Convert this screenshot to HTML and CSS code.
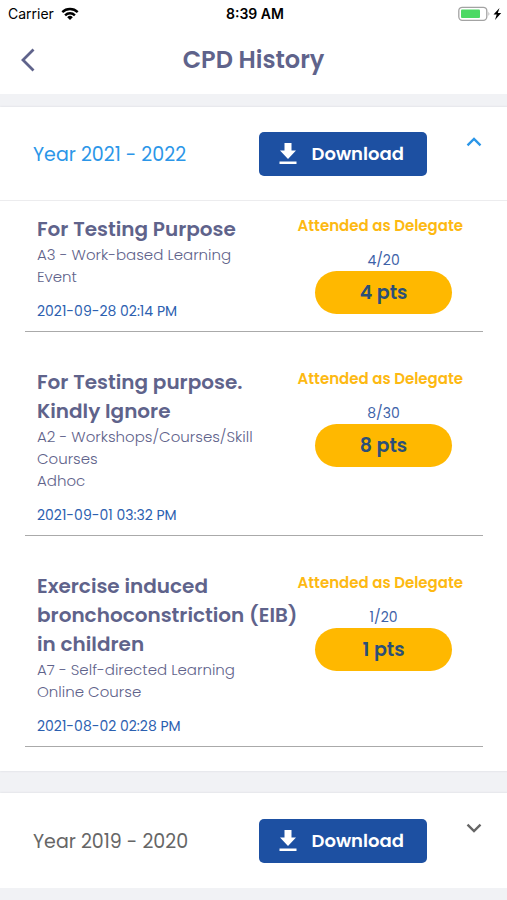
FILE: index.html
```html
<!DOCTYPE html>
<html lang="en">
<head>
<meta charset="utf-8">
<meta name="viewport" content="width=device-width, initial-scale=1">
<title>CPD History</title>
<link rel="stylesheet" href="styles.css">
</head>
<body>
<div class="status">
  <div class="status-left">
    <span>Carrier</span>
    <svg width="18" height="14" viewBox="0 0 18 14" aria-hidden="true"><g fill="none" stroke="#000" stroke-width="2.4"><path d="M1.3 5.2a11 11 0 0 1 15.4 0"/><path d="M4.1 8.3a7 7 0 0 1 9.8 0"/></g><path d="M9 13 6.2 10.2a4 4 0 0 1 5.6 0z"/></svg>
  </div>
  <time class="clock">8:39 AM</time>
  <svg class="battery" width="44" height="16" viewBox="0 0 44 16" aria-hidden="true"><rect x=".8" y="1.3" width="28" height="13" rx="3.5" fill="#fff" stroke="#a3a3a3" stroke-width="1.3"/><rect x="3" y="3.5" width="19" height="8.6" rx="1" fill="#4cd964"/><path d="M30.5 5.5q1.7 2.3 0 4.6z" fill="#a3a3a3"/><path d="M41.500 2 35.500 8.600h3.200L37 14l6.200-7h-3.400z"/></svg>
</div>
<header class="topbar">
  <button class="back" type="button" aria-label="Back"><svg width="16" height="26" viewBox="0 0 16 26"><path d="M13.500 2.500 3 13l10.500 10.500" fill="none" stroke="#5f638b" stroke-width="2.800"/></svg></button>
  <h1>CPD History</h1>
</header>
<main>
  <section class="card">
    <div class="year open">
      <h2>Year 2021 - 2022</h2>
      <button class="download" type="button"><svg width="18" height="22" viewBox="0 0 18 22"><path d="M5.500 0h7v7.500H17L9 16 1 7.500h4.500zM.500 18.500h17V21H.500z" fill="#fff"/></svg>Download</button>
      <button class="toggle" type="button" aria-label="Collapse"><svg width="16" height="10" viewBox="0 0 16 10"><path d="m1.500 8.300 6.500-6.300 6.500 6.300" fill="none" stroke="currentColor" stroke-width="2.400"/></svg></button>
    </div>
    <div class="events">
      <article class="event">
        <div class="info">
          <h3>For Testing Purpose</h3>
          <p>A3 - Work-based Learning</p>
          <p>Event</p>
          <time>2021-09-28 02:14 PM</time>
        </div>
        <div class="score"><strong>Attended as Delegate</strong><span>4/20</span><b class="points">4 pts</b></div>
      </article>
      <article class="event">
        <div class="info">
          <h3>For Testing purpose.<br>Kindly Ignore</h3>
          <p>A2 - Workshops/Courses/Skill<br>Courses</p>
          <p>Adhoc</p>
          <time>2021-09-01 03:32 PM</time>
        </div>
        <div class="score"><strong>Attended as Delegate</strong><span>8/30</span><b class="points">8 pts</b></div>
      </article>
      <article class="event">
        <div class="info">
          <h3>Exercise induced<br>bronchoconstriction (EIB)<br>in children</h3>
          <p>A7 - Self-directed Learning</p>
          <p>Online Course</p>
          <time>2021-08-02 02:28 PM</time>
        </div>
        <div class="score"><strong>Attended as Delegate</strong><span>1/20</span><b class="points">1 pts</b></div>
      </article>
    </div>
  </section>
  <section class="card">
    <div class="year">
      <h2>Year 2019 - 2020</h2>
      <button class="download" type="button"><svg width="18" height="22" viewBox="0 0 18 22"><path d="M5.500 0h7v7.500H17L9 16 1 7.500h4.500zM.500 18.500h17V21H.500z" fill="#fff"/></svg>Download</button>
      <button class="toggle" type="button" aria-label="Expand"><svg width="16" height="10" viewBox="0 0 16 10"><path d="m1.500 1.700 6.500 6.300 6.500-6.300" fill="none" stroke="currentColor" stroke-width="2.400"/></svg></button>
    </div>
  </section>
</main>
</body>
</html>
```
FILE: styles.css
```css
* { box-sizing: border-box; }
body {
  margin: 0;
  background: #f1f2f5;
  color: #5f638b;
  font-family: Poppins, Inter, sans-serif;
}
h1, h2, h3, p { margin: 0; }
button { border: 0; padding: 0; background: none; font: inherit; color: inherit; cursor: pointer; }
svg { display: block; }

.status {
  display: grid;
  grid-template-columns: 1fr auto 1fr;
  align-items: center;
  height: 28px;
  padding: 0 5px 0 8px;
  background: #fff;
  color: #000;
  font: 500 14px/28px Inter, sans-serif;
}
.status-left { display: flex; align-items: center; gap: 7px; font-weight: 400; }
.clock { font-weight: 600; }
.battery { justify-self: end; }

.topbar {
  display: grid;
  grid-template-columns: 48px 1fr 48px;
  align-items: center;
  height: 66px;
  padding-bottom: 3px;
  background: #fff;
}
.back { justify-self: center; padding-left: 8px; }
.topbar h1 { font-size: 24px; line-height: 32px; font-weight: 600; text-align: center; }

main { display: grid; gap: 22px; padding-top: 13px; }
.card { background: #fff; box-shadow: 0 0 2px #d5d7dc; }

.year {
  display: grid;
  grid-template-columns: 1fr 168px 56px;
  align-items: center;
  height: 95px;
  padding: 0 25px 0 33px;
  color: #666;
}
.year.open { height: 94px; color: #2b96e8; border-bottom: 1px solid #ececee; }
.year h2 { padding-top: 2px; font-size: 19px; line-height: 28px; font-weight: 400; }
.download {
  display: flex;
  align-items: center;
  gap: 15px;
  height: 44px;
  padding-left: 20px;
  border-radius: 5px;
  background: #1d50a2;
  color: #fff;
  font-size: 18px;
  font-weight: 600;
}
.toggle { align-self: start; justify-self: end; padding: 30px 1px 8px; }

.events { padding: 14px 25px 24px; }
.event {
  display: grid;
  grid-template-columns: 1fr 172px;
  padding: 0 13px 9px 12px;
  border-bottom: 1px solid #aaa;
}
.event + .event { padding-top: 36px; }
.info h3 { font-size: 20px; line-height: 29px; font-weight: 600; white-space: nowrap; }
.info p { font-size: 15px; line-height: 22px; font-weight: 300; color: #5f638b; }
.info time { display: block; margin-top: 12px; font-size: 14px; line-height: 22px; color: #2c60b0; }
.score {
  display: flex;
  flex-direction: column;
  align-items: center;
  color: #3d62a8;
  font-size: 14px;
  line-height: 22px;
}
.score strong { align-self: flex-start; color: #fdb913; font-size: 15px; font-weight: 600; white-space: nowrap; }
.score span { margin-top: 12px; }
.points {
  width: 137px;
  border-radius: 22px;
  background: #ffb800;
  color: #2b4f78;
  font-size: 19px;
  line-height: 43px;
  font-weight: 600;
  text-align: center;
}
```
